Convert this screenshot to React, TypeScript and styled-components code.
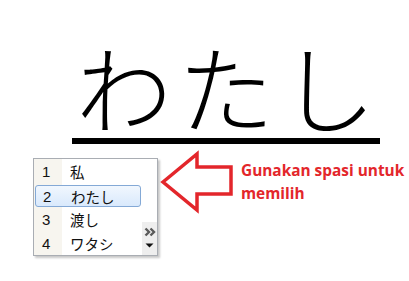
import React from "react";
import styled, { createGlobalStyle } from "styled-components";

const GlobalStyle = createGlobalStyle`
  html, body { margin: 0; padding: 0; background: #ffffff; }
  #root { width: 409px; height: 281px; overflow: hidden; }
`;

const Page = styled.div`
  width: 409px;
  height: 281px;
  background: #fff;
  display: flex;
  flex-direction: column;
`;

const Title = styled.div`
  margin-left: 72px;
  margin-top: 37px;
  width: 308px;
  display: flex;
  flex-direction: column;
`;

const BigWord = styled.div`
  height: 101px;
  display: flex;
  justify-content: space-between;
  padding: 0 4px 0 4px;
`;

const BigChar = styled.span`
  width: 96px;
  font-family: "Noto Sans CJK JP", sans-serif;
  font-weight: 300;
  font-size: 96px;
  line-height: 96px;
  color: #000;
  white-space: nowrap;
`;

const Bar = styled.div`
  height: 6px;
  background: #000;
`;

const Lower = styled.div`
  display: flex;
  align-items: flex-start;
  margin-top: 6px;
`;

const Window = styled.div`
  margin-left: 33px;
  margin-top: 8px;
  width: 123px;
  height: 96px;
  border: 1px solid #a9adb3;
  background: #fff;
  box-shadow: 2px 2px 2px rgba(0, 0, 0, 0.22);
  display: flex;
`;

const List = styled.div`
  width: 108px;
  display: flex;
  flex-direction: column;
  background: linear-gradient(to right, #f7f5ef 0, #f7f5ef 28px, #fff 28px);
`;

const Row = styled.div<{ $selected?: boolean }>`
  height: ${(p) => (p.$selected ? "20px" : "24px")};
  margin: ${(p) => (p.$selected ? "2px 1px 0 1px" : "0")};
  display: grid;
  grid-template-columns: ${(p) => (p.$selected ? "27px" : "28px")} 1fr;
  align-items: center;
  border: ${(p) => (p.$selected ? "1px solid #84a9d6" : "none")};
  border-radius: 3px;
  background: ${(p) =>
    p.$selected ? "linear-gradient(#f1f7fe, #d9e9fc)" : "transparent"};
`;

const Num = styled.span<{ $selected?: boolean }>`
  font-family: "Liberation Sans", Arial, sans-serif;
  font-size: 15px;
  color: #111;
  padding-left: ${(p) => (p.$selected ? "7px" : "8px")};
`;

const Cand = styled.span`
  font-family: "Noto Sans CJK JP", sans-serif;
  font-weight: 400;
  font-size: 14.5px;
  color: #111;
  padding-left: 8px;
  white-space: nowrap;
`;

const ScrollCol = styled.div`
  width: 15px;
  display: flex;
  flex-direction: column;
  justify-content: flex-end;
`;

const ScrollPanel = styled.div`
  height: 33px;
  background: #eeeeee;
  display: flex;
  flex-direction: column;
  align-items: center;
  justify-content: space-around;
  padding: 2px 0 4px;
  box-sizing: border-box;
`;

const ArrowSvg = styled.svg`
  margin-left: 2px;
  flex: none;
`;

const Hint = styled.div`
  margin-left: 5px;
  margin-top: 9px;
  font-family: "Open Sans", sans-serif;
  font-weight: 700;
  font-size: 15.4px;
  line-height: 23px;
  color: #e3262b;
  width: 168px;
`;

const candidates = ["私", "わたし", "渡し", "ワタシ"];

export default function App() {
  return (
    <Page>
      <GlobalStyle />
      <Title>
        <BigWord>
          {["わ", "た", "し"].map((ch) => (
            <BigChar key={ch}>{ch}</BigChar>
          ))}
        </BigWord>
        <Bar />
      </Title>
      <Lower>
        <Window>
          <List>
            {candidates.map((c, i) => (
              <Row key={c} $selected={i === 1}>
                <Num $selected={i === 1}>{i + 1}</Num>
                <Cand>{c}</Cand>
              </Row>
            ))}
          </List>
          <ScrollCol>
            <ScrollPanel>
              <svg width="12" height="10" viewBox="0 0 12 10">
                <path d="M1.5 1.5 L5 5 L1.5 8.5 M6.5 1.5 L10 5 L6.5 8.5" fill="none" stroke="#5a5a5a" strokeWidth="2.4" />
              </svg>
              <svg width="9" height="5" viewBox="0 0 9 5">
                <path d="M0.5 0.5 L8.5 0.5 L4.5 4.5 Z" fill="#111" />
              </svg>
            </ScrollPanel>
          </ScrollCol>
        </Window>
        <ArrowSvg width="76" height="66" viewBox="160 150 76 66">
          <polygon
            points="163,182 197,154 197,167 231,167 231,194 197,194 197,210"
            fill="none"
            stroke="#e3262b"
            strokeWidth="3.5"
            strokeLinejoin="miter"
          />
        </ArrowSvg>
        <Hint>Gunakan spasi untuk memilih</Hint>
      </Lower>
    </Page>
  );
}
